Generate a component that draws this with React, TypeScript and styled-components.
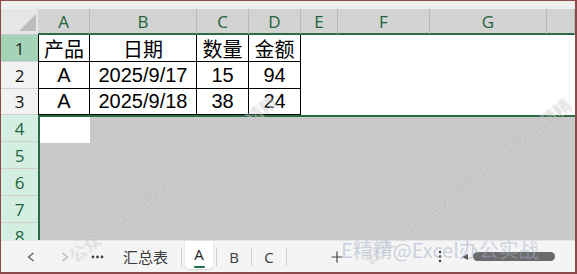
import React from "react";
import styled, { createGlobalStyle, css } from "styled-components";

const COLORS = {
  frame: "#8a4b4b",
  strip: "#efefef",
  corner: "#e6e6e6",
  cornerMark: "#bdbdbd",
  colHead: "#d3d3d3",
  colHeadLine: "#b8b8b8",
  green: "#2b6b47",
  greenText: "#21643a",
  rowHeadPlain: "#f2f2f2",
  rowHeadActive: "#a4d4b7",
  rowHeadSelected: "#d4efe1",
  rowHeadLine: "#d0d0d0",
  selection: "#c8c8c8",
  tabBar: "#f4f4f4",
  tabText: "#3a3a3a",
};

const GlobalStyle = createGlobalStyle`
  html, body {
    margin: 0;
    padding: 0;
    background: #ffffff;
  }
  * {
    box-sizing: border-box;
  }
`;

const Frame = styled.div`
  position: relative;
  width: 577px;
  height: 274px;
  display: flex;
  flex-direction: column;
  overflow: hidden;
  border-style: solid;
  border-color: ${COLORS.frame};
  border-width: 1px 2px 2px 1px;
  background: #fff;
  font-family: "Open Sans", "Noto Sans CJK SC", sans-serif;
`;

const TopStrip = styled.div`
  height: 8px;
  background: ${COLORS.strip};
`;

const HeaderRow = styled.div`
  display: flex;
  height: 26px;
`;

const Corner = styled.div`
  width: 37px;
  flex: none;
  display: flex;
  justify-content: flex-end;
  align-items: flex-end;
  padding: 0 2px 3px 0;
  background: ${COLORS.corner};
  border-bottom: 1px solid #c9c9c9;
`;

const CornerMark = styled.div`
  width: 0;
  height: 0;
  border-left: 17px solid transparent;
  border-bottom: 17px solid ${COLORS.cornerMark};
`;

const ColHead = styled.div<{ $width?: number }>`
  ${({ $width }) =>
    $width
      ? css`
          width: ${$width}px;
          flex: none;
        `
      : css`
          flex: 1;
        `}
  display: flex;
  align-items: center;
  justify-content: center;
  background: ${COLORS.colHead};
  border-right: 1px solid ${COLORS.colHeadLine};
  border-bottom: 2px solid ${COLORS.green};
  color: ${COLORS.greenText};
  font-size: 17px;
  padding-top: 1px;
`;

const Row = styled.div<{ $height: number }>`
  display: flex;
  height: ${({ $height }) => $height}px;
`;

type RowHeadKind = "plain" | "active" | "selected";

const RowHead = styled.div<{ $kind: RowHeadKind; $height?: number }>`
  width: 37px;
  flex: none;
  height: ${({ $height }) => ($height ? `${$height}px` : "auto")};
  display: flex;
  align-items: center;
  justify-content: center;
  font-size: 17px;
  border-bottom: 1px solid ${COLORS.rowHeadLine};
  ${({ $kind }) =>
    $kind === "active"
      ? css`
          background: ${COLORS.rowHeadActive};
          color: #2a2a2a;
        `
      : $kind === "selected"
      ? css`
          background: ${COLORS.rowHeadSelected};
          color: ${COLORS.greenText};
        `
      : css`
          background: ${COLORS.rowHeadPlain};
          color: #111;
        `}
`;

const DataCell = styled.div<{ $width: number; $first?: boolean }>`
  width: ${({ $width }) => $width}px;
  flex: none;
  display: flex;
  align-items: center;
  justify-content: center;
  border-right: 1px solid #000;
  border-bottom: 1px solid #000;
  ${({ $first }) =>
    $first &&
    css`
      border-left: 1px solid #000;
    `}
  font-family: "Liberation Sans", "Noto Sans CJK SC", sans-serif;
  font-size: 20px;
  color: #000;
`;

const EmptyCells = styled.div`
  flex: 1;
  background: #fff;
`;

const LowerArea = styled.div`
  display: flex;
  height: 125px;
  overflow: hidden;
`;

const RowHeadColumn = styled.div`
  width: 37px;
  flex: none;
  display: flex;
  flex-direction: column;
`;

const SelectionArea = styled.div`
  flex: 1;
  background: ${COLORS.selection};
  border-top: 2px solid ${COLORS.green};
  border-left: 2px solid ${COLORS.green};
`;

const ActiveCell = styled.div`
  width: 50px;
  height: 26px;
  background: #fff;
`;

const TabBar = styled.div`
  height: 32px;
  display: flex;
  align-items: center;
  padding-left: 13px;
  background: ${COLORS.tabBar};
  border-top: 1px solid #e4e4e4;
`;

const IconButton = styled.div<{ $width: number }>`
  width: ${({ $width }) => $width}px;
  height: 100%;
  flex: none;
  display: flex;
  align-items: center;
  justify-content: center;
`;

const SheetTab = styled.div<{ $active?: boolean; $width?: number }>`
  height: 100%;
  flex: none;
  display: flex;
  flex-direction: column;
  align-items: center;
  justify-content: center;
  font-size: 15px;
  color: ${COLORS.tabText};
  ${({ $width }) =>
    $width
      ? css`
          width: ${$width}px;
        `
      : css`
          padding: 0 10px;
        `}
  ${({ $active }) =>
    $active &&
    css`
      height: 28px;
      align-self: flex-start;
      background: #fff;
      border-radius: 0 0 5px 5px;
      box-shadow: 0 1px 2px rgba(0, 0, 0, 0.12);
      color: #222;
      padding-top: 1px;
    `}
`;

const TabUnderline = styled.div`
  width: 11px;
  height: 2px;
  margin-top: 2px;
  border-radius: 1px;
  background: #1e7145;
`;

const TabSep = styled.div`
  width: 1px;
  height: 18px;
  flex: none;
  margin: 0 3px;
  background: #cfcfcf;
`;

const Spacer = styled.div`
  flex: 1;
`;

const ScrollArrow = styled.div`
  width: 0;
  height: 0;
  flex: none;
  margin-right: 5px;
  border-top: 3.5px solid transparent;
  border-bottom: 3.5px solid transparent;
  border-right: 6px solid #555;
`;

const ScrollThumb = styled.div`
  width: 82px;
  height: 9px;
  flex: none;
  margin-right: 20px;
  border-radius: 5px;
  background: #6b6b6b;
`;

const Watermark = styled.div<{ $left: number; $top: number }>`
  position: absolute;
  left: ${({ $left }) => $left}px;
  top: ${({ $top }) => $top}px;
  transform: rotate(-38deg);
  transform-origin: 0 50%;
  white-space: nowrap;
  pointer-events: none;
  font-family: "Noto Sans CJK SC", sans-serif;
  font-size: 17px;
  color: rgba(255, 255, 255, 0.5);
  text-shadow: 0 0 1px rgba(0, 0, 0, 0.22);
`;

const Signature = styled.div`
  position: absolute;
  left: 340px;
  top: 234px;
  white-space: nowrap;
  pointer-events: none;
  font-family: "Noto Sans CJK SC", sans-serif;
  font-size: 20px;
  color: rgba(160, 172, 200, 0.5);
`;

const COLUMNS = [
  { label: "A", width: 52 },
  { label: "B", width: 107 },
  { label: "C", width: 52 },
  { label: "D", width: 52 },
  { label: "E", width: 37 },
  { label: "F", width: 92 },
  { label: "G", width: 117 },
  { label: "", width: 0 },
];

const ROWS = [
  { id: 1, height: 27, kind: "active" as RowHeadKind, cells: ["产品", "日期", "数量", "金额"] },
  { id: 2, height: 27, kind: "plain" as RowHeadKind, cells: ["A", "2025/9/17", "15", "94"] },
  { id: 3, height: 26, kind: "plain" as RowHeadKind, cells: ["A", "2025/9/18", "38", "24"] },
];

const Chevron = ({ dir, color }: { dir: "left" | "right"; color: string }) => (
  <svg width="8" height="10" viewBox="0 0 8 10">
    <polyline
      points={dir === "left" ? "6.5,1 1.5,5 6.5,9" : "1.5,1 6.5,5 1.5,9"}
      fill="none"
      stroke={color}
      strokeWidth="1.2"
    />
  </svg>
);

const Dots = () => (
  <svg width="13" height="4" viewBox="0 0 13 4">
    <circle cx="2" cy="2" r="1.4" fill="#444" />
    <circle cx="6.5" cy="2" r="1.4" fill="#444" />
    <circle cx="11" cy="2" r="1.4" fill="#444" />
  </svg>
);

const Plus = () => (
  <svg width="12" height="12" viewBox="0 0 12 12">
    <path d="M6 0.5V11.5M0.5 6H11.5" stroke="#444" strokeWidth="1.2" />
  </svg>
);

const VDots = () => (
  <svg width="4" height="13" viewBox="0 0 4 13">
    <circle cx="2" cy="2" r="1.2" fill="#333" />
    <circle cx="2" cy="6.5" r="1.2" fill="#333" />
    <circle cx="2" cy="11" r="1.2" fill="#333" />
  </svg>
);

const WATERMARK = "公众号:Excel办公实战\u00a0\u00a0\u00a0作者:E精精";

export default function App() {
  return (
    <>
      <GlobalStyle />
      <Frame>
        <TopStrip />
        <HeaderRow>
          <Corner>
            <CornerMark />
          </Corner>
          {COLUMNS.map((col, i) => (
            <ColHead key={i} $width={col.width || undefined}>
              {col.label}
            </ColHead>
          ))}
        </HeaderRow>

        {ROWS.map((row) => (
          <Row key={row.id} $height={row.height}>
            <RowHead $kind={row.kind}>{row.id}</RowHead>
            {row.cells.map((value, i) => (
              <DataCell key={i} $width={COLUMNS[i].width} $first={i === 0}>
                {value}
              </DataCell>
            ))}
            <EmptyCells />
          </Row>
        ))}

        <LowerArea>
          <RowHeadColumn>
            {[4, 5, 6, 7, 8].map((n) => (
              <RowHead key={n} $kind="selected" $height={27}>
                {n}
              </RowHead>
            ))}
          </RowHeadColumn>
          <SelectionArea>
            <ActiveCell />
          </SelectionArea>
        </LowerArea>

        <TabBar>
          <IconButton $width={34}>
            <Chevron dir="left" color="#555" />
          </IconButton>
          <IconButton $width={33}>
            <Chevron dir="right" color="#b3b3b3" />
          </IconButton>
          <IconButton $width={32}>
            <Dots />
          </IconButton>
          <SheetTab>汇总表</SheetTab>
          <TabSep />
          <SheetTab $active $width={28}>
            A
            <TabUnderline />
          </SheetTab>
          <TabSep />
          <SheetTab $width={28}>B</SheetTab>
          <TabSep />
          <SheetTab $width={28}>C</SheetTab>
          <TabSep />
          <IconButton $width={30} style={{ marginLeft: 32 }}>
            <Plus />
          </IconButton>
          <Spacer />
          <IconButton $width={16} style={{ marginRight: 14 }}>
            <VDots />
          </IconButton>
          <ScrollArrow />
          <ScrollThumb />
        </TabBar>

        <Watermark $left={70} $top={244}>
          {WATERMARK}
        </Watermark>
        <Watermark $left={364} $top={247}>
          {WATERMARK}
        </Watermark>
        <Signature>E精精@Excel办公实战</Signature>
      </Frame>
    </>
  );
}
